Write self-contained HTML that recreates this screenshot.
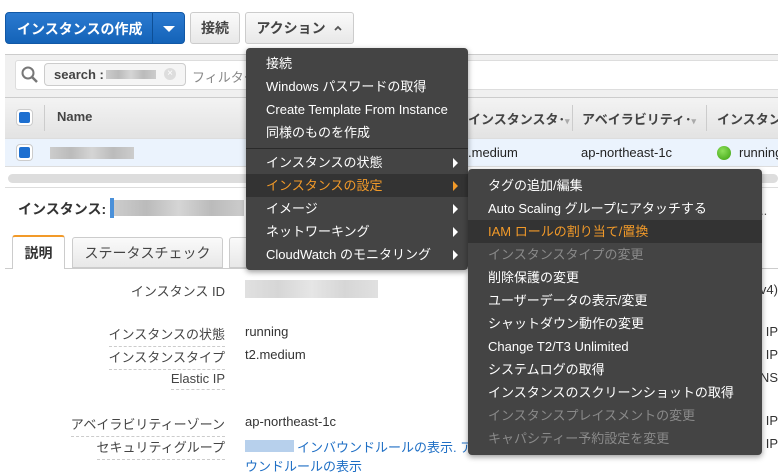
<!DOCTYPE html>
<html><head><meta charset="utf-8"><style>
*{margin:0;padding:0;box-sizing:border-box}
body{width:778px;height:470px;overflow:hidden;background:#fff;font-family:"Liberation Sans","Noto Sans CJK JP",sans-serif;font-size:13px;color:#333;position:relative}
.a{position:absolute;white-space:nowrap}
.btn{position:absolute;border:1px solid #ccc;border-radius:3px;background:linear-gradient(#fafafa,#e8e8e8);font-weight:bold;color:#444;font-size:14px;display:flex;align-items:center;justify-content:center}
.menu{position:absolute;background:#444;border-radius:4px;box-shadow:0 2px 6px rgba(0,0,0,.4);color:#fff;font-size:13px}
.mi{position:absolute;left:0;right:0;height:23px;line-height:23px;padding-left:20px;white-space:nowrap}
.hl{background:#333;color:#f29a29}
.dis{color:#8a8a8a}
.arr{position:absolute;right:10px;top:7px;width:0;height:0;border-left:5px solid #fff;border-top:5px solid transparent;border-bottom:5px solid transparent}
.lab{position:absolute;right:553px;white-space:nowrap;color:#444;border-bottom:1px dashed #ccc;padding-bottom:3px}
.blur{position:absolute;background:linear-gradient(90deg,#ccc,#bbb,#d5d5d5,#bbb,#ccc)}
.rt{position:absolute;right:0;white-space:nowrap}
</style></head><body>
<div class="a" style="left:5px;top:12px;width:180px;height:32px;background:linear-gradient(#2b7ad0,#1463b8);border-radius:4px;border:1px solid #1158a6"></div>
<div class="a" style="left:17px;top:19px;color:#fff;font-weight:bold;font-size:14px">インスタンスの作成</div>
<div class="a" style="left:152px;top:13px;width:1px;height:30px;background:#0d4f96"></div>
<div class="a" style="left:163px;top:26px;border-left:6px solid transparent;border-right:6px solid transparent;border-top:6px solid #fff"></div>
<div class="btn" style="left:190px;top:12px;width:50px;height:32px">接続</div>
<div class="btn" style="left:245px;top:12px;width:109px;height:32px;font-weight:bold">アクション <svg width="10" height="8" style="margin-left:7px"><path d="M2 6 L5 3 L8 6" fill="none" stroke="#555" stroke-width="1.8"/></svg></div>

<div class="a" style="left:5px;top:54px;width:773px;height:44px;background:#f0f0f0;border-top:1px solid #ccc"></div>
<div class="a" style="left:15px;top:60px;width:770px;height:30px;background:#fff;border:1px solid #ddd;border-radius:3px"></div>
<svg class="a" style="left:21px;top:66px" width="18" height="18"><circle cx="7" cy="7" r="5.5" fill="none" stroke="#777" stroke-width="2"/><line x1="11" y1="11" x2="16" y2="16" stroke="#777" stroke-width="2.5"/></svg>
<div class="a" style="left:44px;top:63px;width:142px;height:23px;border:1px solid #ccc;border-radius:4px;background:#f5f5f5"></div>
<div class="a" style="left:54px;top:67px;font-weight:bold;color:#444">search :</div>
<div class="blur" style="left:106px;top:70px;width:50px;height:9px"></div>
<div class="a" style="left:164px;top:68px;width:12px;height:12px;border-radius:50%;background:#ddd;color:#fff;font-size:10px;line-height:12px;text-align:center">×</div>
<div class="a" style="left:192px;top:67px;color:#888">フィルター</div>

<div class="a" style="left:5px;top:97px;width:773px;height:42px;background:linear-gradient(#f3f3f3,#e3e3e3);border-top:1px solid #ccc;border-bottom:1px solid #ddd"></div>
<div class="a" style="left:16px;top:109px;width:17px;height:17px;border:1px solid #ccc;border-radius:4px;background:#fff"></div>
<div class="a" style="left:19px;top:112px;width:11px;height:11px;border-radius:2px;background:#1d6fd0"></div>
<div class="a" style="left:44px;top:105px;width:1px;height:26px;background:#ccc"></div>
<div class="a" style="left:57px;top:109px;font-weight:bold;font-size:13px;color:#444">Name</div>
<div class="a" style="left:468px;top:109px;font-weight:bold;color:#444">インスタンスタ･<span style="color:#aaa;font-size:9px">▾</span></div>
<div class="a" style="left:572px;top:105px;width:1px;height:26px;background:#ccc"></div>
<div class="a" style="left:582px;top:109px;font-weight:bold;color:#444">アベイラビリティ･<span style="color:#aaa;font-size:9px">▾</span></div>
<div class="a" style="left:706px;top:105px;width:1px;height:26px;background:#ccc"></div>
<div class="a" style="left:717px;top:109px;font-weight:bold;color:#444">インスタン</div>

<div class="a" style="left:5px;top:139px;width:773px;height:28px;background:#ebf3fd;border-bottom:1px solid #ddd"></div>
<div class="a" style="left:16px;top:144px;width:17px;height:17px;border:1px solid #ccc;border-radius:4px;background:#fff"></div>
<div class="a" style="left:19px;top:147px;width:11px;height:11px;border-radius:2px;background:#1d6fd0"></div>
<div class="blur" style="left:50px;top:147px;width:84px;height:12px"></div>
<div class="a" style="left:468px;top:145px;color:#222">.medium</div>
<div class="a" style="left:581px;top:145px;color:#222">ap-northeast-1c</div>
<div class="a" style="left:717px;top:146px;width:14px;height:14px;border-radius:50%;background:radial-gradient(circle at 40% 35%,#8de05a,#3aa00e)"></div>
<div class="a" style="left:739px;top:145px;color:#222">running</div>

<div class="a" style="left:8px;top:174px;width:770px;height:9px;background:#ddd;border-radius:5px"></div>
<div class="a" style="left:5px;top:187px;width:773px;height:1px;background:#ddd"></div>

<div class="a" style="left:18px;top:199px;font-weight:bold;font-size:14px;color:#333">インスタンス:</div>
<div class="a" style="left:110px;top:198px;width:4px;height:20px;background:#4a90d9"></div>
<div class="blur" style="left:114px;top:200px;width:130px;height:16px"></div>
<div class="a" style="left:760px;top:203px;color:#555">..</div>

<div class="a" style="left:5px;top:268px;width:773px;height:1px;background:#ccc"></div>
<div class="a" style="left:12px;top:235px;width:53px;height:34px;background:#fff;border:1px solid #ccc;border-top:2px solid #f29a29;border-bottom:none;border-radius:3px 3px 0 0;font-weight:bold;font-size:14px;text-align:center;line-height:32px">説明</div>
<div class="a" style="left:72px;top:237px;width:151px;height:31px;background:linear-gradient(#fafafa,#e8e8e8);border:1px solid #ccc;border-radius:3px 3px 0 0;font-size:14px;text-align:center;line-height:30px;color:#444">ステータスチェック</div>
<div class="a" style="left:229px;top:237px;width:30px;height:31px;background:linear-gradient(#fafafa,#e8e8e8);border:1px solid #ccc;border-radius:3px 3px 0 0"></div>

<div class="lab" style="top:281px;border:none">インスタンス ID</div>
<div class="blur" style="left:245px;top:280px;width:133px;height:18px;opacity:.6"></div>
<div class="lab" style="top:324px">インスタンスの状態</div><div class="a" style="left:245px;top:324px">running</div>
<div class="lab" style="top:347px">インスタンスタイプ</div><div class="a" style="left:245px;top:347px">t2.medium</div>
<div class="lab" style="top:371px">Elastic IP</div>
<div class="lab" style="top:414px">アベイラビリティーゾーン</div><div class="a" style="left:245px;top:414px">ap-northeast-1c</div>
<div class="lab" style="top:437px">セキュリティグループ</div>
<div class="a" style="left:245px;top:440px;width:49px;height:12px;background:#b7d0ec"></div>
<div class="a" style="left:297px;top:437px;color:#1f6fc5">インバウンドルールの表示. ア</div>
<div class="a" style="left:245px;top:456px;color:#1f6fc5">ウンドルールの表示</div>

<div class="rt" style="top:282px">Pv4)</div>
<div class="rt" style="top:324px">7 IP</div>
<div class="rt" style="top:347px">6 IP</div>
<div class="rt" style="top:370px">DNS</div>
<div class="rt" style="top:413px">IP</div>
<div class="rt" style="top:436px">IP</div>

<div class="menu" style="left:246px;top:48px;width:222px;height:222px">
<div class="mi" style="top:4px">接続</div>
<div class="mi" style="top:27px">Windows パスワードの取得</div>
<div class="mi" style="top:50px">Create Template From Instance</div>
<div class="mi" style="top:73px">同様のものを作成</div>
<div class="a" style="left:0;right:0;top:100px;height:1px;background:#2a2a2a"></div>
<div class="mi" style="top:103px">インスタンスの状態<span class="arr"></span></div>
<div class="mi hl" style="top:126px">インスタンスの設定<span class="arr" style="border-left-color:#f29a29"></span></div>
<div class="mi" style="top:149px">イメージ<span class="arr"></span></div>
<div class="mi" style="top:172px">ネットワーキング<span class="arr"></span></div>
<div class="mi" style="top:195px">CloudWatch のモニタリング<span class="arr"></span></div>
</div>

<div class="menu" style="left:468px;top:169px;width:294px;height:286px">
<div class="mi" style="top:5px">タグの追加/編集</div>
<div class="mi" style="top:28px">Auto Scaling グループにアタッチする</div>
<div class="mi hl" style="top:51px">IAM ロールの割り当て/置換</div>
<div class="mi dis" style="top:74px">インスタンスタイプの変更</div>
<div class="mi" style="top:97px">削除保護の変更</div>
<div class="mi" style="top:120px">ユーザーデータの表示/変更</div>
<div class="mi" style="top:143px">シャットダウン動作の変更</div>
<div class="mi" style="top:166px">Change T2/T3 Unlimited</div>
<div class="mi" style="top:189px">システムログの取得</div>
<div class="mi" style="top:212px">インスタンスのスクリーンショットの取得</div>
<div class="mi dis" style="top:235px">インスタンスプレイスメントの変更</div>
<div class="mi dis" style="top:258px">キャパシティー予約設定を変更</div>
</div>
</body></html>
